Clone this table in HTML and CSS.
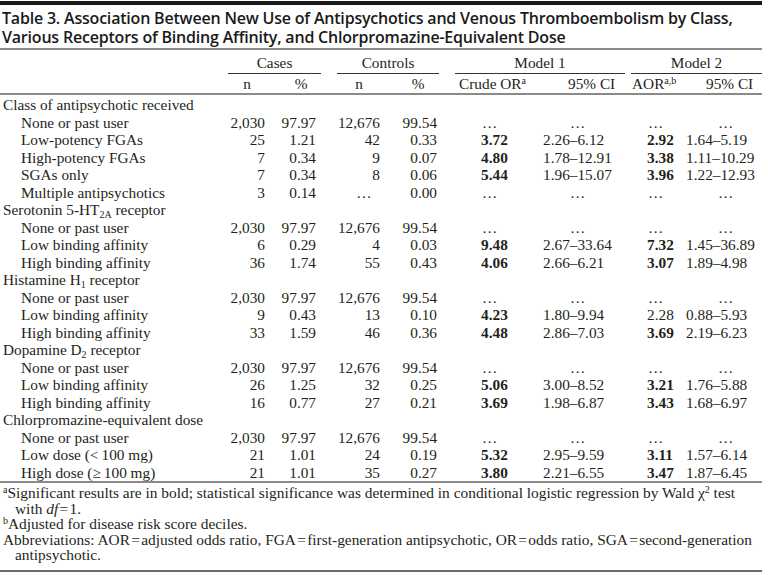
FILE: index.html
```html
<!DOCTYPE html>
<html lang="en">
<head>
<meta charset="utf-8">
<title>Table 3</title>
<link rel="stylesheet" href="styles.css">
</head>
<body>
<div class="wrap">
  <h1 class="title">Table 3. Association Between New Use of Antipsychotics and Venous Thromboembolism by Class,<br>Various Receptors of Binding Affinity, and Chlorpromazine-Equivalent Dose</h1>
  <table class="tbl">
    <colgroup>
      <col class="w0"><col class="w1"><col class="w2"><col class="w3"><col class="w4"><col class="w5"><col class="w6"><col class="w7"><col class="w8">
    </colgroup>
    <thead>
      <tr class="h1">
        <th></th>
        <th colspan="2"><div class="span g-cases">Cases</div></th>
        <th colspan="2"><div class="span g-controls">Controls</div></th>
        <th colspan="2"><div class="span g-m1">Model 1</div></th>
        <th colspan="2"><div class="span g-m2">Model 2</div></th>
      </tr>
      <tr class="h2">
        <th></th>
        <th class="hc">n</th>
        <th class="hc">%</th>
        <th class="hc">n</th>
        <th class="hc">%</th>
        <th class="hl h-or">Crude OR<sup>a</sup></th>
        <th class="hl h-ci1">95% CI</th>
        <th class="hl h-aor">AOR<sup>a,b</sup></th>
        <th class="hl h-ci2">95% CI</th>
      </tr>
    </thead>
    <tbody>
      <tr class="grp first"><td colspan="9">Class of antipsychotic received</td></tr>
      <tr><td class="sub">None or past user</td><td>2,030</td><td>97.97</td><td>12,676</td><td>99.54</td><td class="el">…</td><td class="el">…</td><td class="el">…</td><td class="el">…</td></tr>
      <tr><td class="sub">Low-potency FGAs</td><td>25</td><td>1.21</td><td>42</td><td>0.33</td><td><b>3.72</b></td><td>2.26–6.12</td><td><b>2.92</b></td><td>1.64–5.19</td></tr>
      <tr><td class="sub">High-potency FGAs</td><td>7</td><td>0.34</td><td>9</td><td>0.07</td><td><b>4.80</b></td><td>1.78–12.91</td><td><b>3.38</b></td><td>1.11–10.29</td></tr>
      <tr><td class="sub">SGAs only</td><td>7</td><td>0.34</td><td>8</td><td>0.06</td><td><b>5.44</b></td><td>1.96–15.07</td><td><b>3.96</b></td><td>1.22–12.93</td></tr>
      <tr><td class="sub">Multiple antipsychotics</td><td>3</td><td>0.14</td><td class="el">…</td><td>0.00</td><td class="el">…</td><td class="el">…</td><td class="el">…</td><td class="el">…</td></tr>
      <tr class="grp"><td colspan="9">Serotonin 5-HT<sub>2A</sub> receptor</td></tr>
      <tr><td class="sub">None or past user</td><td>2,030</td><td>97.97</td><td>12,676</td><td>99.54</td><td class="el">…</td><td class="el">…</td><td class="el">…</td><td class="el">…</td></tr>
      <tr><td class="sub">Low binding affinity</td><td>6</td><td>0.29</td><td>4</td><td>0.03</td><td><b>9.48</b></td><td>2.67–33.64</td><td><b>7.32</b></td><td>1.45–36.89</td></tr>
      <tr><td class="sub">High binding affinity</td><td>36</td><td>1.74</td><td>55</td><td>0.43</td><td><b>4.06</b></td><td>2.66–6.21</td><td><b>3.07</b></td><td>1.89–4.98</td></tr>
      <tr class="grp"><td colspan="9">Histamine H<sub>1</sub> receptor</td></tr>
      <tr><td class="sub">None or past user</td><td>2,030</td><td>97.97</td><td>12,676</td><td>99.54</td><td class="el">…</td><td class="el">…</td><td class="el">…</td><td class="el">…</td></tr>
      <tr><td class="sub">Low binding affinity</td><td>9</td><td>0.43</td><td>13</td><td>0.10</td><td><b>4.23</b></td><td>1.80–9.94</td><td>2.28</td><td>0.88–5.93</td></tr>
      <tr><td class="sub">High binding affinity</td><td>33</td><td>1.59</td><td>46</td><td>0.36</td><td><b>4.48</b></td><td>2.86–7.03</td><td><b>3.69</b></td><td>2.19–6.23</td></tr>
      <tr class="grp"><td colspan="9">Dopamine D<sub>2</sub> receptor</td></tr>
      <tr><td class="sub">None or past user</td><td>2,030</td><td>97.97</td><td>12,676</td><td>99.54</td><td class="el">…</td><td class="el">…</td><td class="el">…</td><td class="el">…</td></tr>
      <tr><td class="sub">Low binding affinity</td><td>26</td><td>1.25</td><td>32</td><td>0.25</td><td><b>5.06</b></td><td>3.00–8.52</td><td><b>3.21</b></td><td>1.76–5.88</td></tr>
      <tr><td class="sub">High binding affinity</td><td>16</td><td>0.77</td><td>27</td><td>0.21</td><td><b>3.69</b></td><td>1.98–6.87</td><td><b>3.43</b></td><td>1.68–6.97</td></tr>
      <tr class="grp"><td colspan="9">Chlorpromazine-equivalent dose</td></tr>
      <tr><td class="sub">None or past user</td><td>2,030</td><td>97.97</td><td>12,676</td><td>99.54</td><td class="el">…</td><td class="el">…</td><td class="el">…</td><td class="el">…</td></tr>
      <tr><td class="sub">Low dose (&lt;&#8201;100 mg)</td><td>21</td><td>1.01</td><td>24</td><td>0.19</td><td><b>5.32</b></td><td>2.95–9.59</td><td><b>3.11</b></td><td>1.57–6.14</td></tr>
      <tr><td class="sub">High dose (≥&#8201;100 mg)</td><td>21</td><td>1.01</td><td>35</td><td>0.27</td><td><b>3.80</b></td><td>2.21–6.55</td><td><b>3.47</b></td><td>1.87–6.45</td></tr>
    </tbody>
  </table>
  <div class="notes">
    <p class="note"><sup>a</sup>Significant results are in bold; statistical significance was determined in conditional logistic regression by Wald χ<sup>2</sup> test<br>with <i>df</i>&#8202;=&#8202;1.</p>
    <p class="note"><sup>b</sup>Adjusted for disease risk score deciles.</p>
    <p class="note">Abbreviations: AOR&#8202;=&#8202;adjusted odds ratio, FGA&#8202;=&#8202;first-generation antipsychotic, OR&#8202;=&#8202;odds ratio, SGA&#8202;=&#8202;second-generation<br>antipsychotic.</p>
  </div>
</div>
</body>
</html>
```

FILE: styles.css
```css
html, body {
  margin: 0;
  padding: 0;
  background: #ffffff;
}

.wrap {
  width: 762px;
  padding-top: 1px;
  color: #231f20;
}

.title {
  margin: 0;
  border-top: 4px solid #1a1a1a;
  border-bottom: 2px solid #8a8a8a;
  padding: 4px 0 1px 2px;
  font-family: "Open Sans", "Noto Sans", sans-serif;
  font-weight: 600;
  font-size: 16px;
  line-height: 19px;
  letter-spacing: -0.2px;
  color: #1a1a1a;
}

.tbl {
  width: 762px;
  table-layout: fixed;
  border-collapse: collapse;
  font-family: "Liberation Serif", "Times New Roman", serif;
  font-size: 15.3px;
  line-height: 17.5px;
}

.w0 { width: 222px; }
.w1 { width: 50px; }
.w2 { width: 58px; }
.w3 { width: 58px; }
.w4 { width: 60px; }
.w5 { width: 88px; }
.w6 { width: 92px; }
.w7 { width: 52px; }
.w8 { width: 82px; }

.tbl th {
  font-weight: normal;
  padding: 0;
  line-height: 18px;
  white-space: nowrap;
}

.tbl .h1 th {
  padding-top: 4px;
  padding-bottom: 0;
}

.span {
  text-align: center;
  border-bottom: 1px solid #333;
  padding-bottom: 1px;
}

.g-cases { margin: 0 9px 0 6px; }
.g-controls { margin: 0 9px 0 7px; }
.g-m1 { margin: 0 3px 0 7px; }
.g-m2 { margin: 0 0 0 3px; }

.tbl .h2 th {
  padding-top: 1px;
  border-bottom: 2px solid #8a8a8a;
}

.tbl th.hc { text-align: center; }
.tbl th.hl { text-align: left; }
.tbl th.h-or { padding-left: 11px; }
.tbl th.h-ci1 { padding-left: 32px; }
.tbl th.h-aor { padding-left: 4px; }
.tbl th.h-ci2 { padding-left: 26px; }

.tbl sup {
  font-size: 10px;
  line-height: 0;
  vertical-align: 5px;
}

.tbl sub {
  font-size: 10px;
  line-height: 0;
  vertical-align: -3px;
}

.tbl td {
  padding: 0;
  white-space: nowrap;
}

.tbl tbody tr.first td { padding-top: 1px; }

.grp td { padding-left: 3px; }
.tbl td.sub { padding-left: 21px; }

.tbl td:nth-child(2) { text-align: right; padding-right: 7px; }
.tbl td:nth-child(3) { text-align: right; padding-right: 14px; }
.tbl td:nth-child(4) { text-align: right; padding-right: 8px; }
.tbl td:nth-child(5) { text-align: right; padding-right: 11px; }
.tbl td:nth-child(6) { padding-left: 33px; }
.tbl td:nth-child(7) { padding-left: 7px; }
.tbl td:nth-child(8) { padding-left: 19px; }
.tbl td:nth-child(9) { padding-left: 6px; }

.tbl td.el:nth-child(4) { text-align: center; padding-right: 0; padding-left: 10px; }
.tbl td.el:nth-child(6) { padding-left: 34px; }
.tbl td.el:nth-child(7) { padding-left: 34px; }
.tbl td.el:nth-child(8) { padding-left: 20px; }
.tbl td.el:nth-child(9) { padding-left: 38px; }

.tbl b { font-weight: bold; }

.notes {
  border-top: 2px solid #8a8a8a;
  border-bottom: 2px solid #6a6a6a;
  padding: 2px 0 7px 3px;
  font-family: "Liberation Serif", "Times New Roman", serif;
  font-size: 15.4px;
  line-height: 15.5px;
}

.note {
  margin: 0;
  padding-left: 12px;
  text-indent: -12px;
  white-space: nowrap;
}

.note sup {
  font-size: 10px;
  line-height: 0;
  vertical-align: 5px;
}
```
